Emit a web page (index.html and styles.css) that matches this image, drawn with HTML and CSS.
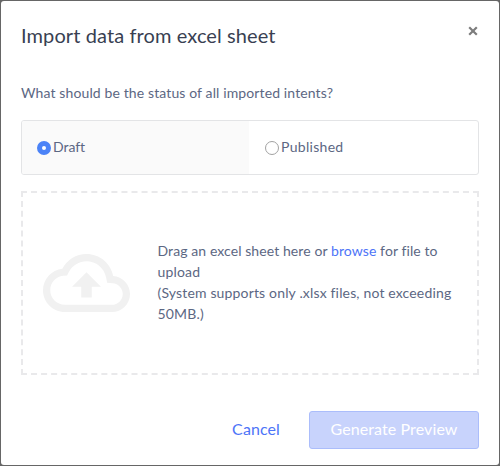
FILE: index.html
```html
<!DOCTYPE html>
<html lang="en">
<head>
<meta charset="utf-8">
<title>Import data</title>
<link rel="stylesheet" href="styles.css">
</head>
<body>
<main class="modal">
  <header class="header">
    <h1 class="title">Import data from excel sheet</h1>
    <button class="close" aria-label="Close"><svg viewBox="0 0 10 10"><path d="M1.2 1.2 8.8 8.8M8.8 1.2 1.2 8.8"/></svg></button>
  </header>
  <p class="question">What should be the status of all imported intents?</p>
  <div class="options">
    <label class="option selected"><input type="radio" name="status" checked><span class="draft">Draft</span></label>
    <label class="option"><input type="radio" name="status"><span class="published">Published</span></label>
  </div>
  <section class="dropzone">
    <svg class="cloud" viewBox="0 4 24 16"><path d="M19.35 10.04C18.67 6.59 15.64 4 12 4 9.11 4 6.6 5.64 5.35 8.04 2.34 8.36 0 10.91 0 14c0 3.31 2.69 6 6 6h13c2.76 0 5-2.24 5-5 0-2.64-2.05-4.78-4.65-4.96zM19 18H6c-2.21 0-4-1.79-4-4 0-2.05 1.53-3.76 3.56-3.97l1.07-.11.5-.95C8.08 7.14 9.94 6 12 6c2.62 0 4.88 1.86 5.39 4.43l.3 1.5 1.53.11c1.56.1 2.78 1.41 2.78 2.96 0 1.65-1.35 3-3 3zM8 13h2.55v3h2.9v-3H16l-4-4z"/></svg>
    <p class="hint"><span class="drag">Drag an excel sheet here or <a class="browse">browse</a> for file to</span><br>upload<br><span class="support">(System supports only .xlsx files, not exceeding</span><br>50MB.)</p>
  </section>
  <footer class="footer">
    <button class="cancel">Cancel</button>
    <button class="generate" disabled>Generate Preview</button>
  </footer>
</main>
</body>
</html>
```
FILE: styles.css
```css
* { box-sizing: border-box; }
body {
  margin: 0;
  height: 466px;
  padding: 1px;
  background: #666;
  font-family: Lato, "Open Sans", sans-serif;
  font-size: 14px;
  line-height: 21px;
  color: #5c6783;
}
h1, p { margin: 0; font-weight: inherit; }
button { font: inherit; padding: 0; border: 0; background: none; }
.modal {
  height: 464px;
  padding: 20px;
  background: #fff;
  border-radius: 3px;
}
.header { display: flex; justify-content: space-between; height: 61px; }
.title {
  font-size: 20px;
  line-height: 28px;
  letter-spacing: .1px;
  color: #393f52;
  white-space: nowrap;
}
.close { width: 12px; height: 19px; display: flex; align-items: center; justify-content: center; }
.close svg { width: 10px; height: 10px; stroke: #7d7d7d; stroke-width: 2.2; fill: none; }
.question { height: 38px; white-space: nowrap; letter-spacing: .12px; }
.options {
  display: flex;
  height: 55px;
  border: 1px solid #e3e4e6;
  border-radius: 3px;
  overflow: hidden;
}
.option { display: flex; align-items: center; flex: 1; padding-left: 16px; gap: 2px; }
.selected { flex: 0 0 227px; padding-left: 15px; background: #fafafa; }
.option span { padding-bottom: 2px; letter-spacing: .3px; }
.option .draft { letter-spacing: -.05px; }
.option input {
  appearance: none;
  width: 14px;
  height: 14px;
  margin: 0;
  border: 1px solid #a2a2a2;
  border-radius: 50%;
  background: #fff;
}
.option input:checked { border: 5px solid #4b83f7; }
.dropzone {
  display: flex;
  align-items: center;
  height: 184px;
  margin-top: 16px;
  padding-left: 20px;
  border: 2px dashed #e9e9eb;
}
.cloud { width: 87px; height: 58px; margin-right: 27.5px; fill: #f1f1f1; flex: none; }
.hint { white-space: nowrap; letter-spacing: .16px; padding-bottom: 2px; }
.drag { letter-spacing: .09px; }
.browse { color: #4d74f8; }
.footer { display: flex; justify-content: flex-end; margin-top: 36px; font-size: 16px; }
.cancel { color: #4d74f8; margin-right: 29px; padding-bottom: 3px; letter-spacing: .1px; }
.generate {
  width: 170px;
  height: 38px;
  padding-bottom: 3px;
  border: 1px solid #abbdfb;
  border-radius: 3px;
  background: #c8d3fc;
  color: #fff;
  letter-spacing: .1px;
}
```
